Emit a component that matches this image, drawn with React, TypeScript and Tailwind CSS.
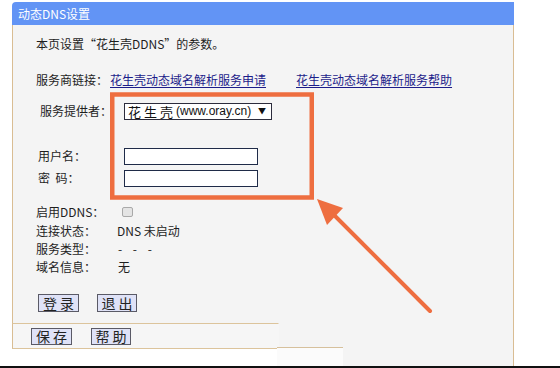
const cjk = { fontFamily: '"Noto Sans CJK SC", "Noto Sans", sans-serif' };

function Btn({ label, className = "" }: { label: string; className?: string }) {
  return (
    <div
      className={`flex items-center justify-center border border-[#5a5a66] bg-[#dfe2f7] text-[14px] leading-none tracking-[3px] text-[#222] ${className}`}
    >
      <span className="pl-[3px]">{label}</span>
    </div>
  );
}

function InfoRow({ label, value, className = "" }: { label: string; value: React.ReactNode; className?: string }) {
  return (
    <div className={`flex h-[18px] items-center ${className}`}>
      <span className="w-[81px]">{label}</span>
      <span>{value}</span>
    </div>
  );
}

export default function App() {
  return (
    <div className="relative h-[368px] w-[560px] overflow-hidden bg-white text-[12px] text-[#1e1e1e]" style={cjk}>
      <div className="ml-[12px] flex w-[502px] flex-col pt-[2px]">
        {/* header */}
        <div className="flex h-[23px] items-center rounded-tl-[4px] bg-[#6294f5] pl-[6px] text-[12px] text-white">
          动态DNS设置
        </div>

        {/* body */}
        <div className="flex flex-col border-x border-[#d9bd93] bg-[#f4f4f4] pb-[11px] pl-[23px] pt-[9px]">
          <div className="flex h-[20px] items-center">本页设置“花生壳DDNS”的参数。</div>

          <div className="mt-[16px] flex h-[20px] items-center">
            <span className="w-[74px]">服务商链接：</span>
            <a className="text-[#1c1c8a] underline underline-offset-2">花生壳动态域名解析服务申请</a>
            <a className="ml-[30px] text-[#1c1c8a] underline underline-offset-2">花生壳动态域名解析服务帮助</a>
          </div>

          <div className="mt-[11px] flex h-[20px] items-center pl-[4px]">
            <span className="w-[84px]">服务提供者：</span>
            <div className="flex h-[17px] w-[148px] items-center border border-[#2c2c3c] bg-white pl-[3px] text-[#111]">
              <span className="text-[13px] leading-none tracking-[3px]">花生壳</span>
              <span className="text-[12px] leading-none" style={{ fontFamily: '"Liberation Sans", Arial, sans-serif' }}>
                (www.oray.cn)
              </span>
              <span className="ml-auto mr-[5px] text-[8px] leading-none">▼</span>
            </div>
          </div>

          <div className="mt-[25px] flex h-[20px] items-center pl-[2px]">
            <span className="w-[86px]">用户名：</span>
            <div className="h-[17px] w-[134px] border border-[#1f2b48] bg-white" />
          </div>
          <div className="mt-[2px] flex h-[20px] items-center pl-[2px]">
            <span className="w-[86px]">密&nbsp;&nbsp;码：</span>
            <div className="h-[17px] w-[134px] border border-[#1f2b48] bg-white" />
          </div>

          <InfoRow
            className="mt-[15px]"
            label="启用DDNS："
            value={<span className="ml-[5px] block h-[10px] w-[11px] rounded-[2px] border border-[#a9a9a9] bg-[#e4e4e4]" />}
          />
          <InfoRow className="mt-[1px]" label="连接状态：" value="DNS 未启动" />
          <InfoRow label="服务类型：" value={<span className="pl-[1px] tracking-[4px]">- - -</span>} />
          <InfoRow label="域名信息：" value={<span className="pl-[1px]">无</span>} />

          <div className="mt-[18px] flex items-center gap-[18px] pl-[2px]">
            <Btn label="登录" className="h-[18px] w-[41px]" />
            <Btn label="退出" className="h-[18px] w-[40px]" />
          </div>
        </div>

        {/* footer */}
        <div className="flex">
          <div className="flex w-[267px] flex-col">
            <div className="flex h-[26px] items-center gap-[19px] border-x border-y border-l-[#d9bd93] border-r-transparent border-y-[#dcc49c] bg-[#f6f6f6] pl-[18px]">
              <Btn label="保存" className="h-[17px] w-[41px]" />
              <Btn label="帮助" className="h-[17px] w-[40px]" />
            </div>
            <div className="h-[18px] bg-white" />
          </div>
          <div className="flex-1 border-r border-[#d9bd93] bg-[#f4f4f4]">
            <div className="ml-[-2px] mt-[24px] h-[1px] w-[66px] bg-[#d6c09c]" />
            <div className="ml-[-2px] h-[18px] w-[66px] bg-[#fbfbfb]" />
          </div>
        </div>
      </div>

      {/* bottom edge */}
      <div className="absolute bottom-0 left-0 h-[2px] w-full bg-[#111]" />

      {/* annotation: highlight box + arrow */}
      <svg className="pointer-events-none absolute left-0 top-0" width="560" height="368" viewBox="0 0 560 368">
        <rect x="112.25" y="94.5" width="199.5" height="103" fill="none" stroke="#ee6e40" strokeWidth="4.5" />
        <line x1="324" y1="205" x2="430" y2="311" stroke="#ee6e40" strokeWidth="4" strokeLinecap="round" />
        <polygon points="317,199 343,208 327,225" fill="#ee6e40" />
      </svg>
    </div>
  );
}
